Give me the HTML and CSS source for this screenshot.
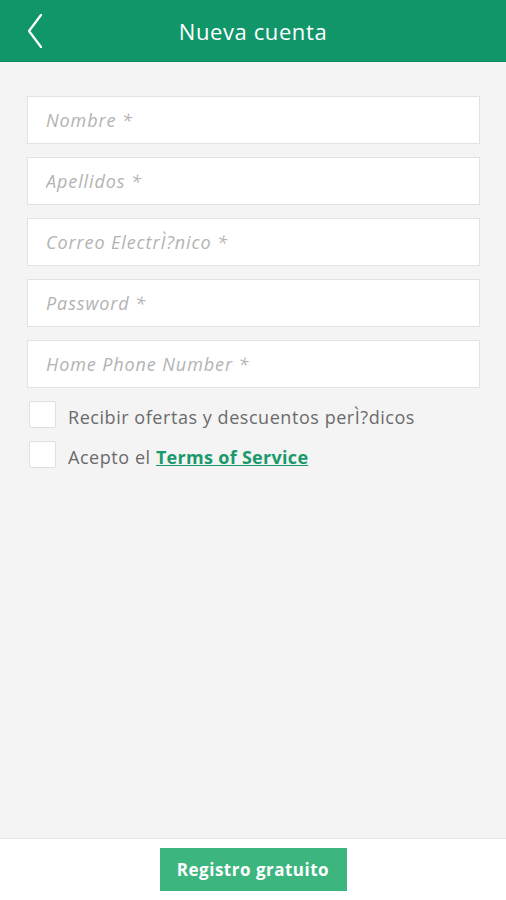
FILE: index.html
```html
<!DOCTYPE html>
<html lang="es">
<head>
    <meta charset="UTF-8">
    <meta name="viewport" content="width=device-width, initial-scale=1.0">
    <title>Nueva cuenta</title>
    <link rel="stylesheet" href="styles.css">
</head>
<body>
    <div class="header">
        <a class="back" href="#">
            <svg width="16" height="34" viewBox="0 0 16 34">
                <polyline points="14,1 2,17 14,33" fill="none" stroke="#fff" stroke-width="2.2" stroke-linecap="round" stroke-linejoin="round"/>
            </svg>
        </a>
        <h1>Nueva cuenta</h1>
    </div>

    <form class="form">
        <input type="text" class="field" placeholder="Nombre *">
        <input type="text" class="field" placeholder="Apellidos *">
        <input type="email" class="field" placeholder="Correo ElectrÌ?nico *">
        <input type="password" class="field" placeholder="Password *">
        <input type="tel" class="field" placeholder="Home Phone Number *">

        <label class="check">
            <span class="box"></span>
            <span class="check-text">Recibir ofertas y descuentos perÌ?dicos</span>
        </label>
        <label class="check">
            <span class="box"></span>
            <span class="check-text">Acepto el <a href="#" class="terms">Terms of Service</a></span>
        </label>
    </form>

    <div class="footer">
        <button type="button" class="submit-btn">Registro gratuito</button>
    </div>
</body>
</html>
```

FILE: styles.css
```css
html, body {
    height: 100%;
}
body {
    margin: 0;
    font-family: "Open Sans", Arial, sans-serif;
    background-color: #f4f4f4;
    display: flex;
    flex-direction: column;
}
.header {
    height: 61px;
    background-color: #11966a;
    border-bottom: 1px solid #0e8a60;
    display: flex;
    align-items: center;
    justify-content: center;
    position: relative;
}
.back {
    position: absolute;
    left: 27px;
    top: 14px;
    display: block;
}
.header h1 {
    margin: 0;
    color: #fff;
    font-size: 22px;
    font-weight: 400;
    letter-spacing: 0.6px;
}
.form {
    flex: 1;
    padding: 34px 26px 0 27px;
    display: flex;
    flex-direction: column;
}
.field {
    height: 48px;
    margin-bottom: 13px;
    border: 1px solid #e2e2e2;
    background: #fff;
    padding: 0 18px;
    font-family: inherit;
    font-size: 18px;
    letter-spacing: 0.9px;
    box-sizing: border-box;
    outline: none;
}
.field::placeholder {
    color: #b3b3b3;
    font-style: italic;
}
.check {
    display: flex;
    align-items: flex-start;
    gap: 12px;
    margin-left: 2px;
    margin-bottom: 13px;
    color: #6b6b6b;
    font-size: 18px;
    letter-spacing: 0.55px;
}
.check-text {
    line-height: 21px;
    padding-top: 6px;
}
.box {
    width: 25px;
    height: 25px;
    background: #fff;
    border: 1px solid #e0e0e0;
    border-radius: 2px;
    flex-shrink: 0;
}
.terms {
    color: #1a9a6c;
    font-weight: 700;
    text-decoration: underline;
    letter-spacing: 0.3px;
}
.footer {
    height: 61px;
    background: #fff;
    border-top: 1px solid #e6e6e6;
    display: flex;
    justify-content: center;
    align-items: center;
}
.submit-btn {
    background-color: #3db57f;
    color: white;
    border: none;
    width: 187px;
    height: 43px;
    font-family: inherit;
    font-size: 17px;
    font-weight: 700;
    letter-spacing: 0.5px;
    cursor: pointer;
}
```
